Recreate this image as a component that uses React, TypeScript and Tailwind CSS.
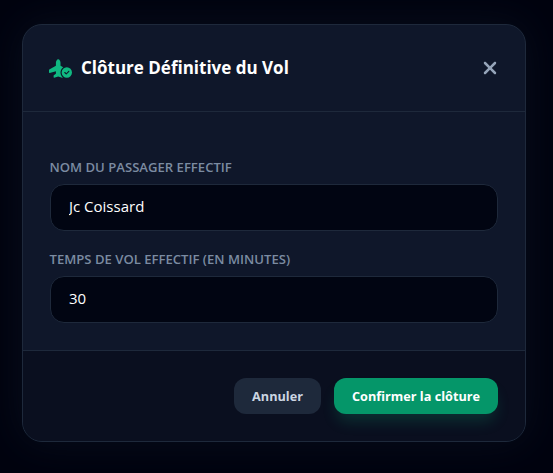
import React from 'react'
import { FaPlaneCircleCheck, FaXmark } from 'react-icons/fa6'

const Field: React.FC<{ label: string; value: string; type?: string }> = ({ label, value, type = 'text' }) => (
  <div>
    <label className="block -ml-[0.5px] text-[13.1px] leading-[18px] font-semibold text-[#7b8ba1] mb-2 uppercase">{label}</label>
    <input
      type={type}
      defaultValue={value}
      className="w-full h-[47px] px-[18px] pb-[3px] text-[15px] text-white bg-[#010512] border border-[#1e293b] rounded-[14px] outline-none"
    />
  </div>
)

export default function App() {
  return (
    <div className="h-[473px] w-[553px] overflow-hidden bg-[#00030f] pt-6 pl-[22px] font-['Open_Sans','Noto_Sans',sans-serif]">
      <div className="w-[504px] h-[418px] flex flex-col bg-[#0f172a] border border-[#1e293b] rounded-[20px] overflow-hidden shadow-[0_0_40px_rgba(15,23,42,0.5)]">
        {/* Header */}
        <div className="h-[87px] flex-none flex items-center justify-between px-[27px] border-b border-[#1e293b]">
          <div className="flex items-center gap-[9px] -ml-px">
            <FaPlaneCircleCheck className="w-[23px] h-[19px] text-[#10b981]" />
            <h2 className="text-[17px] font-bold text-white">Clôture Définitive du Vol</h2>
          </div>
          <button className="text-[#94a3b8] -mr-[2px]" aria-label="Fermer">
            <FaXmark className="w-5 h-5" />
          </button>
        </div>

        {/* Form */}
        <div className="flex-1 flex flex-col gap-[19px] px-[27px] pt-[46px]">
          <Field label="Nom du passager effectif" value="Jc Coissard" />
          <Field label="Temps de vol effectif (en minutes)" value="30" type="number" />
        </div>

        {/* Footer */}
        <div className="h-[91px] flex-none flex items-center justify-end gap-[13px] px-[27px] bg-[#0a0f1f] border-t border-[#1e293b]">
          <button className="h-9 px-[18px] pt-[2px] rounded-xl bg-[#1e293b] text-[12.7px] font-bold text-[#cbd5e1]">Annuler</button>
          <button className="h-9 px-[18px] pt-[2px] rounded-xl bg-[#059669] text-[12.7px] font-bold text-white shadow-[0_10px_15px_-3px_rgba(16,185,129,0.2)]">Confirmer la clôture</button>
        </div>
      </div>
    </div>
  )
}
